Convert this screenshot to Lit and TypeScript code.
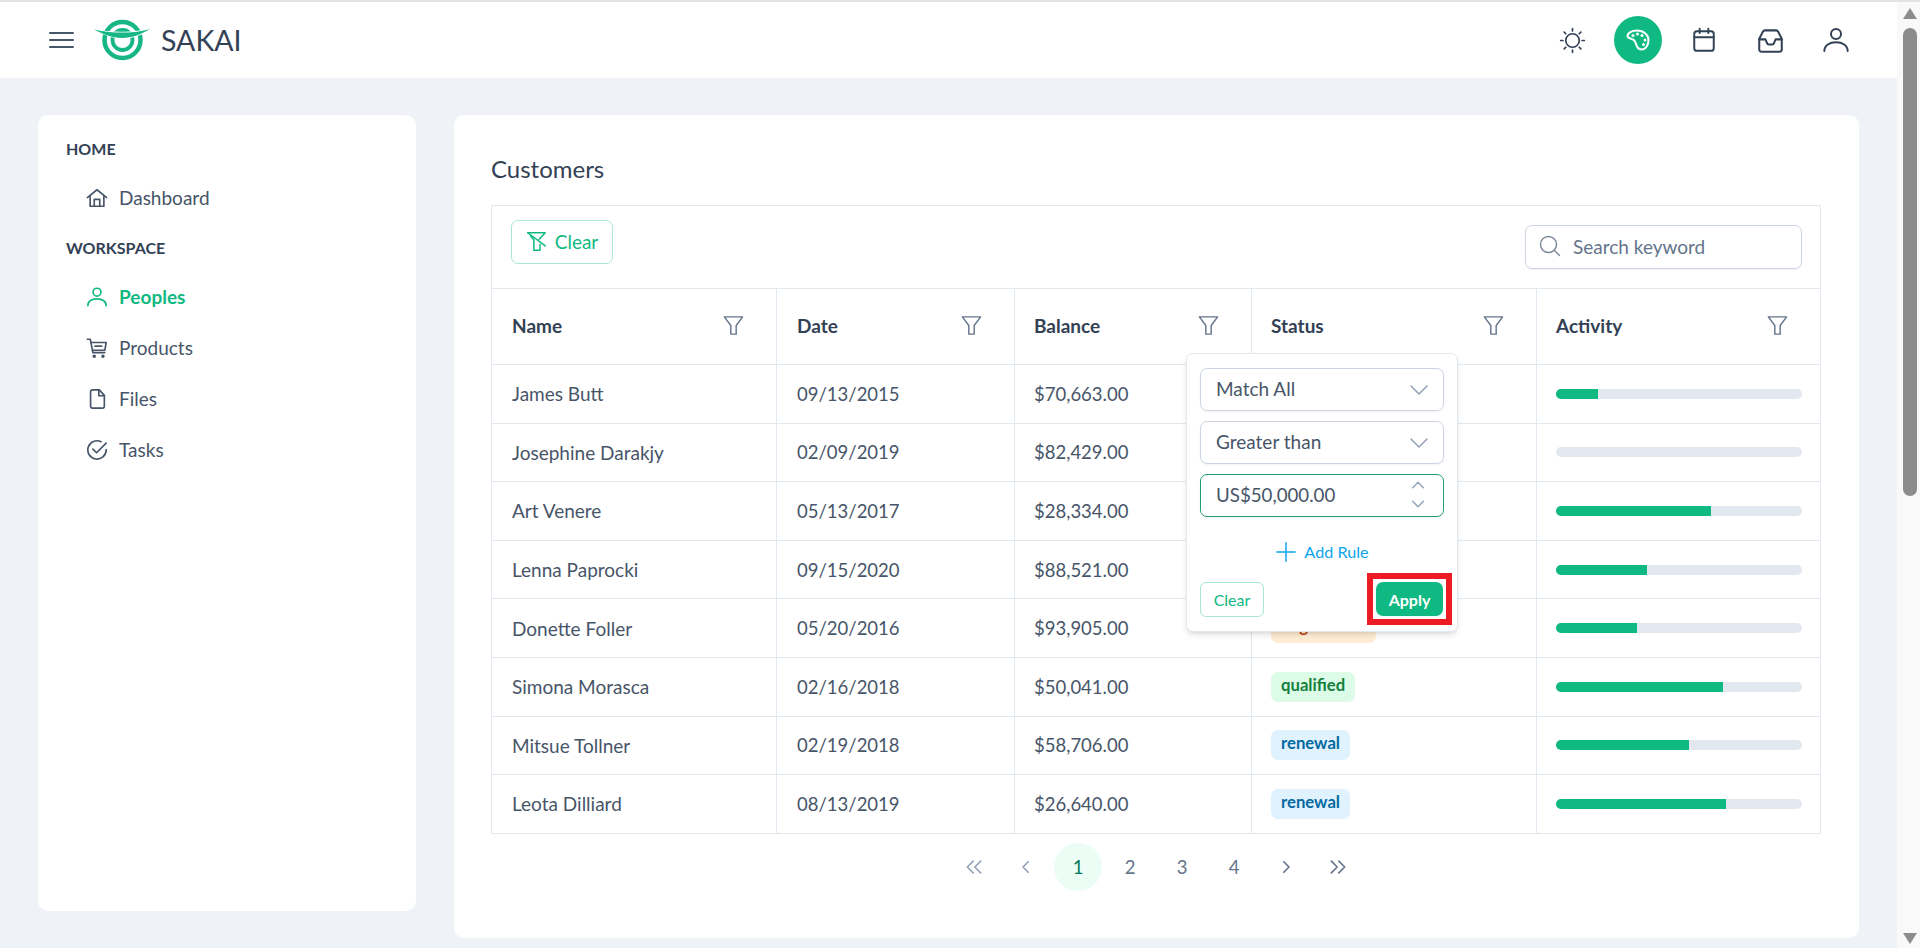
import { LitElement, html, svg, css, nothing } from 'lit';
import { customElement } from 'lit/decorators.js';

const ico = (d: unknown, size = 24, sw = 1.6) => html`<svg class="ico" width="${size}" height="${size}" viewBox="0 0 24 24" fill="none" stroke="currentColor" stroke-width="${sw}" stroke-linecap="round" stroke-linejoin="round">${d}</svg>`;

const paths = {
  home: svg`<path d="M1.500 11.500 12 3l10.500 8.500"/><path d="M4.500 9.500V21h15V9.500"/><path d="M9 21v-7.500h6V21"/>`,
  user: svg`<circle cx="12" cy="6.800" r="4.300"/><path d="M2 21.500c0-5 4.500-7.500 10-7.500s10 2.500 10 7.500"/>`,
  cart: svg`<path d="M1.500 2.500h3.200l2.800 14.500h13"/><path d="M5.300 6h16.700l-1.500 8.500H7"/><path d="M10 10h7" stroke-width="2"/><circle cx="9" cy="21" r="1" fill="currentColor"/><circle cx="18.500" cy="21" r="1" fill="currentColor"/>`,
  file: svg`<path d="M7 2h7.500L20 8v12a2 2 0 0 1-2 2H7a2 2 0 0 1-2-2V4a2 2 0 0 1 2-2Z"/><path d="M14 2v6.500h6"/>`,
  check: svg`<path d="M22 11.500V12A10 10 0 1 1 16.500 3"/><path d="m7.500 11 4 4L22 4.500"/>`,
  filter: svg`<path d="M2.500 3h19L14.800 12v9H9.200v-9z"/>`,
  filterSlash: svg`<path d="M2 2h20l-7 7.500M5 5.500l4 4.500v12h7v-7"/><path d="M2 2l20 15"/>`,
  search: svg`<circle cx="10.500" cy="10.500" r="8"/><path d="m16.500 16.500 5 5"/>`,
  sun: svg`<circle cx="12" cy="12" r="6"/><path d="M12 1.500v2M12 20.500v2M1.500 12h2M20.500 12h2M4.600 4.600 6 6M18 18l1.400 1.400M4.600 19.400 6 18M18 6l1.400-1.400"/>`,
  calendar: svg`<rect x="3" y="4" width="18" height="18" rx="2.500"/><path d="M3 9.500h18M8 1.500v4M16 1.500v4"/>`,
  inbox: svg`<path d="M7 3h10a2 2 0 0 1 1.700 1L22 10.500V20a2 2 0 0 1-2 2H4a2 2 0 0 1-2-2v-9.500L5.300 4A2 2 0 0 1 7 3Z"/><path d="M2 11h5.500l1.500 3.500a1.500 1.500 0 0 0 1.400 1h3.200a1.500 1.500 0 0 0 1.400-1l1.500-3.500H22"/>`,
  down: svg`<path d="m4 8 8 8 8-8"/>`,
  up: svg`<path d="m4 16 8-8 8 8"/>`,
  left: svg`<path d="m15 5-7 7 7 7"/>`,
  right: svg`<path d="m9 5 7 7-7 7"/>`,
  dleft: svg`<path d="m11 5-7 7 7 7M20 5l-7 7 7 7"/>`,
  dright: svg`<path d="m4 5 7 7-7 7M13 5l7 7-7 7"/>`,
  plus: svg`<path d="M12 2v20M2 12h20"/>`,
};

// first four statuses sit behind the open filter menu
const rows = [
  ['James Butt', '09/13/2015', '$70,663.00', '', '', 17],
  ['Josephine Darakjy', '02/09/2019', '$82,429.00', '', '', 0],
  ['Art Venere', '05/13/2017', '$28,334.00', '', '', 63],
  ['Lenna Paprocki', '09/15/2020', '$88,521.00', '', '', 37],
  ['Donette Foller', '05/20/2016', '$93,905.00', 'negotiation', 'orange', 33],
  ['Simona Morasca', '02/16/2018', '$50,041.00', 'qualified', 'green', 68],
  ['Mitsue Tollner', '02/19/2018', '$58,706.00', 'renewal', 'blue', 54],
  ['Leota Dilliard', '08/13/2019', '$26,640.00', 'renewal', 'blue', 69],
];

@customElement('app-root')
export class AppRoot extends LitElement {
  static styles = css`
    :host {
      display: flex;
      position: relative;
      width: 1920px;
      height: 948px;
      overflow: hidden;
      background: #eff3f8;
      font-family: Lato, sans-serif;
      font-size: 19px;
      color: #334155;
      box-sizing: border-box;
      border-top: 2px solid #e4e4e4;
    }
    * { box-sizing: border-box; }
    .ico { display: block; flex: none; }
    .page { flex: 1; min-width: 0; }
    .topbar {
      height: 76px;
      background: #fff;
      display: flex;
      align-items: center;
      padding: 0 37px 0 49px;
    }
    .burger { width: 25px; display: flex; flex-direction: column; gap: 5px; margin-right: 20px; }
    .burger i { display: block; height: 2px; background: #475569; border-radius: 1px; }
    .brand { font-size: 28.5px; margin-left: 11px; color: #334155; }
    .logo { display: block; }
    .actions { margin-left: auto; display: flex; align-items: center; gap: 18px; }
    .act { width: 48px; height: 48px; border-radius: 50%; display: flex; align-items: center; justify-content: center; color: #334155; }
    .act.on { background: #10b981; color: #fff; }
    .body { display: flex; align-items: flex-start; gap: 38px; padding: 37px 38px 0; }
    .side {
      width: 378px;
      height: 796px;
      flex: none;
      background: #fff;
      border-radius: 10px;
      padding: 21px 28px;
    }
    .label { font-size: 16px; font-weight: 700; height: 26px; line-height: 26px; margin-bottom: 10px; text-transform: uppercase; }
    .nav {
      height: 51px;
      display: flex;
      align-items: center;
      gap: 11px;
      padding-left: 20px;
      color: #475569;
    }
    .nav.sec { margin-bottom: 12px; }
    .nav.active { color: #10b981; font-weight: 700; }
    .card {
      width: 1405px;
      height: 823px;
      background: #fff;
      border-radius: 10px;
      padding: 38px 38px 0 37px;
    }
    h2 { margin: 0 0 16px; height: 36px; line-height: 32px; font-size: 24px; font-weight: 400; color: #334155; }
    .tools {
      height: 83px;
      border: 1px solid #e2e8f0;
      border-bottom: 0;
      display: flex;
      justify-content: space-between;
      padding: 14px 18px 0 19px;
    }
    .clear-btn {
      width: 102px;
      height: 44px;
      padding-bottom: 1px;
      border: 1px solid #a7e8cf;
      border-radius: 7px;
      color: #10b981;
      display: flex;
      align-items: center;
      justify-content: center;
      gap: 8px;
    }
    .search {
      width: 277px;
      height: 44px;
      margin-top: 5px;
      padding: 0 0 2px 12px;
      border: 1px solid #cbd5e1;
      border-radius: 7px;
      display: flex;
      align-items: center;
      gap: 11px;
      color: #64748b;
      box-shadow: 0 1px 2px rgba(18, 18, 23, 0.05);
    }
    .search svg { color: #7b8798; }
    table { width: 1330px; table-layout: fixed; border-collapse: collapse; }
    th, td { border: 1px solid #e2e8f0; padding: 0 18px 0 19px; text-align: left; color: #334155; font-weight: 400; }
    th:nth-child(-n + 2), td:nth-child(-n + 2) { padding-left: 20px; }
    th { height: 76px; font-weight: 700; }
    td { height: 58.6px; color: #475569; }
    td.num { font-size: 18.5px; }
    .c1 { width: 285px; }
    .c2 { width: 238px; }
    .c3 { width: 237px; }
    .c4 { width: 285px; }
    .th { display: flex; align-items: center; justify-content: space-between; padding-bottom: 2px; }
    .th span { color: #334155; }
    .th svg { color: #64748b; margin-right: 13px; }
    .tag {
      display: inline-block;
      height: 30px;
      line-height: 26px;
      padding: 0 10px;
      border-radius: 7px;
      font-size: 16.7px;
      font-weight: 700;
      vertical-align: middle;
    }
    .tag.green { background: #dcfce7; color: #15803d; }
    .tag.blue { background: #e0f2fe; color: #0369a1; }
    .tag.orange { background: #ffedd5; color: #c2410c; }
    .track { height: 10px; background: #e2e8f0; border-radius: 5px; overflow: hidden; }
    .fill { height: 100%; background: #10b981; }
    .pager { display: flex; justify-content: center; gap: 4px; margin-top: 9px; font-size: 18.5px; }
    .pg {
      width: 48px;
      height: 48px;
      border-radius: 50%;
      display: flex;
      align-items: center;
      justify-content: center;
      color: #64748b;
    }
    .pg.off { color: #94a3b8; }
    .pg.cur { background: #ecfdf5; color: #047857; }
    .bar {
      width: 23px;
      flex: none;
      background: #f9f9f9;
      display: flex;
      flex-direction: column;
      align-items: center;
      padding: 6px 0 4px 3px;
    }
    .arrow-up { width: 0; height: 0; border: 7.500px solid transparent; border-top: 0; border-bottom: 11px solid #8c8c8c; }
    .arrow-down { width: 0; height: 0; border: 7.500px solid transparent; border-bottom: 0; border-top: 11px solid #8c8c8c; margin-top: auto; }
    .thumb { width: 14px; height: 468px; margin-top: 9px; border-radius: 7px; background: #8c8c8c; }
    .menu {
      position: absolute;
      left: 1186px;
      top: 351px;
      width: 272px;
      height: 279px;
      background: #fff;
      border: 1px solid #e2e8f0;
      border-radius: 7px;
      box-shadow: 0 4px 6px -1px rgba(0, 0, 0, 0.1), 0 2px 4px -2px rgba(0, 0, 0, 0.1);
      padding: 14px 13px 0;
      display: flex;
      flex-direction: column;
      gap: 10px;
    }
    .field {
      height: 43px;
      flex: none;
      border: 1px solid #cbd5e1;
      border-radius: 7px;
      display: flex;
      align-items: center;
      justify-content: space-between;
      padding: 0 12px 2px 15px;
      color: #475569;
      box-shadow: 0 1px 2px rgba(18, 18, 23, 0.05);
    }
    .field svg { color: #94a3b8; margin-top: 2px; }
    .field.focus { border-color: #1f9d78; font-size: 18.7px; }
    .spin { display: flex; flex-direction: column; gap: 3px; margin-right: 5px; }
    .spin svg { margin-top: 0; }
    .add {
      height: 36px;
      flex: none;
      margin-top: 8px;
      padding-bottom: 3px;
      display: flex;
      align-items: center;
      justify-content: center;
      gap: 7px;
      color: #0ea5e9;
      font-size: 16.2px;
    }
    .foot { display: flex; flex: none; justify-content: space-between; align-items: center; margin-top: -8px; height: 52px; margin-right: -8px; }
    .small-clear {
      width: 64px;
      height: 35px;
      border: 1px solid #a7e8cf;
      border-radius: 6px;
      color: #10b981;
      font-size: 16px;
      display: flex;
      align-items: center;
      justify-content: center;
    }
    .mark { border: 6px solid #ed1c24; padding: 3px; width: 85px; height: 52px; }
    .apply {
      width: 100%;
      height: 100%;
      background: #10b981;
      border-radius: 7px;
      color: #fff;
      font-size: 16px;
      font-weight: 700;
      display: flex;
      align-items: center;
      justify-content: center;
    }
  `;

  renderLogo() {
    return html`<svg class="logo" width="56" height="42" viewBox="0 0 56 42" fill="none" stroke="#17b685">
      <circle cx="28.500" cy="21" r="18" stroke-width="4.500"/>
      <circle cx="28.500" cy="21" r="10" stroke-width="3.800"/>
      <path d="M0 10.500C10 13 20 13.500 28 13.500S46 13 56 10C48 15 38 19 28 19S9 15 0 10.500Z" fill="#17b685" stroke="#fff" stroke-width="1.500" paint-order="stroke"/>
    </svg>`;
  }

  render() {
    return html`
      <div class="page">
        <header class="topbar">
          <div class="burger"><i></i><i></i><i></i></div>
          ${this.renderLogo()}
          <span class="brand">SAKAI</span>
          <div class="actions">
            <div class="act">${ico(paths.sun, 27, 1.5)}</div>
            <div class="act on">
              <svg width="26" height="26" viewBox="0 0 26 26" fill="none" stroke="#fff" stroke-width="2"><path d="M12 3.500C7 3.500 2.500 6 2.500 9c0 2.200 3 2.300 5.500 3.500 2.800 1.400 2.500 4 4 7 1 2 2.500 3 4.500 3 4.500 0 7-4.700 7-9.500S19 3.500 12 3.500Z"/><g fill="#fff" stroke="none"><circle cx="8" cy="8.500" r="1.500"/><circle cx="12.500" cy="7" r="1.500"/><circle cx="17" cy="8.500" r="1.500"/><circle cx="20" cy="13" r="1.500"/><circle cx="18.500" cy="17.500" r="1.500"/></g></svg>
            </div>
            <div class="act">${ico(paths.calendar, 26, 1.8)}</div>
            <div class="act">${ico(paths.inbox, 27, 1.8)}</div>
            <div class="act">${ico(paths.user, 28, 1.7)}</div>
          </div>
        </header>
        <div class="body">
          <aside class="side">
            <div class="label">Home</div>
            <div class="nav sec">${ico(paths.home, 22, 1.8)}Dashboard</div>
            <div class="label">Workspace</div>
            <div class="nav active">${ico(paths.user, 22, 1.8)}Peoples</div>
            <div class="nav">${ico(paths.cart, 22, 1.8)}Products</div>
            <div class="nav">${ico(paths.file, 22, 1.8)}Files</div>
            <div class="nav">${ico(paths.check, 22, 1.8)}Tasks</div>
          </aside>
          <main class="card">
            <h2>Customers</h2>
            <div class="tools">
              <div class="clear-btn">${ico(paths.filterSlash, 21, 1.7)}Clear</div>
              <div class="search">${ico(paths.search, 24, 1.4)}Search keyword</div>
            </div>
            <table>
              <thead>
                <tr>
                  ${[['Name', 'c1'], ['Date', 'c2'], ['Balance', 'c3'], ['Status', 'c4'], ['Activity', '']].map(
                    ([t, c]) => html`<th class="${c}"><div class="th"><span>${t}</span>${ico(paths.filter, 23, 1.5)}</div></th>`
                  )}
                </tr>
              </thead>
              <tbody>
                ${rows.map(
                  (r) => html`<tr>
                    <td>${r[0]}</td>
                    <td class="num">${r[1]}</td>
                    <td class="num">${r[2]}</td>
                    <td>${r[3] ? html`<span class="tag ${r[4]}">${r[3]}</span>` : nothing}</td>
                    <td><div class="track"><div class="fill" style="width:${r[5]}%"></div></div></td>
                  </tr>`
                )}
              </tbody>
            </table>
            <nav class="pager">
              <div class="pg off">${ico(paths.dleft, 20, 2)}</div>
              <div class="pg off">${ico(paths.left, 18, 2.2)}</div>
              <div class="pg cur">1</div>
              <div class="pg">2</div>
              <div class="pg">3</div>
              <div class="pg">4</div>
              <div class="pg">${ico(paths.right, 18, 2.2)}</div>
              <div class="pg">${ico(paths.dright, 20, 2)}</div>
            </nav>
          </main>
        </div>
      </div>
      <div class="bar"><div class="arrow-up"></div><div class="thumb"></div><div class="arrow-down"></div></div>
      <div class="menu">
        <div class="field">Match All${ico(paths.down, 24, 1.6)}</div>
        <div class="field">Greater than${ico(paths.down, 24, 1.6)}</div>
        <div class="field focus">US$50,000.00
          <div class="spin">${ico(paths.up, 16, 2.2)}${ico(paths.down, 16, 2.2)}</div>
        </div>
        <div class="add">${ico(paths.plus, 22, 1.6)}Add Rule</div>
        <div class="foot">
          <div class="small-clear">Clear</div>
          <div class="mark"><div class="apply">Apply</div></div>
        </div>
      </div>
    `;
  }
}
